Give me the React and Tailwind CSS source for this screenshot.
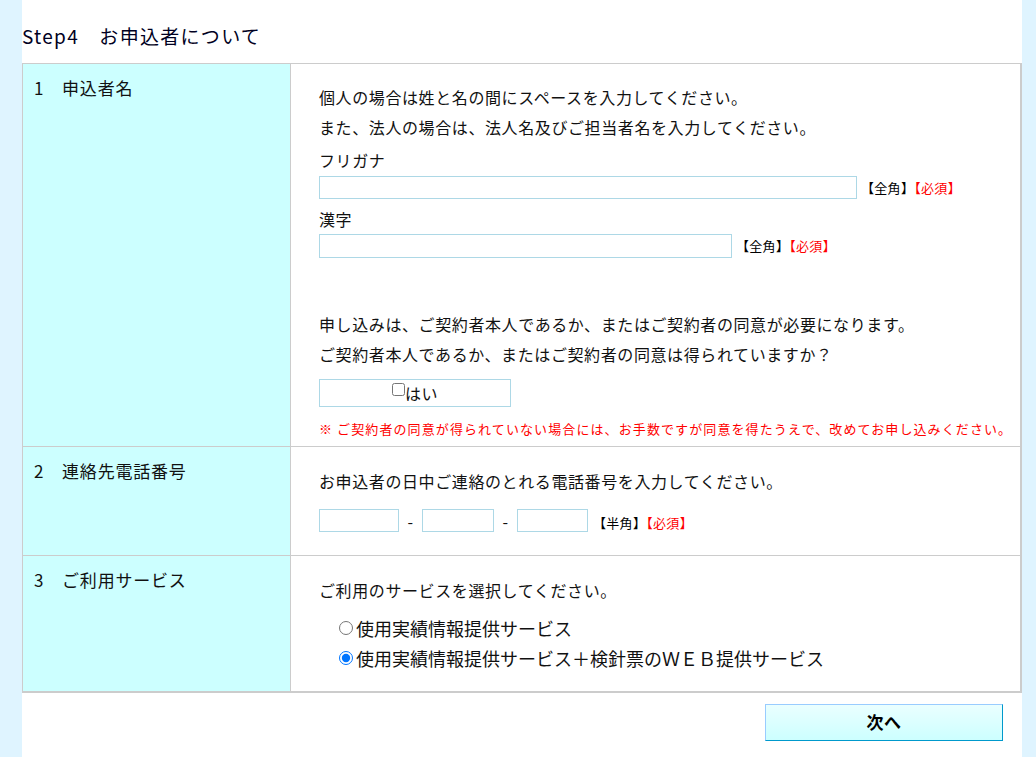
const jp = { fontFamily: '"Noto Sans CJK JP", "Liberation Sans", sans-serif' };

const Tag = ({ kind = '全角' }) => (
  <span className="text-[13px] tracking-[0.3px] whitespace-nowrap">
    <span className="text-black">【{kind}】</span>
    <span className="text-[#ff0000]">【必須】</span>
  </span>
);

const TextBox = ({ className = '' }) => (
  <input type="text" className={'h-[23px] border border-[#add8e6] bg-white outline-none ' + className} />
);

const Label = ({ children }) => (
  <div className="w-[268px] shrink-0 bg-[#ccffff] pl-[11px] pt-[11px] border-r border-[#cccccc] text-[17px] tracking-[0.8px]">
    {children}
  </div>
);

export default function App() {
  return (
    <div className="min-h-[757px] bg-[#dff4ff] px-[22px] pr-[14px] text-[16px] tracking-[0.6px] text-[#111]" style={jp}>
      <div className="min-h-[757px] bg-white">
        <h2 className="pt-[21px] pb-[12px] text-[19px] leading-[30px] tracking-[1.3px] text-[#000022]">Step4　お申込者について</h2>

        <div className="border-t border-l border-r-2 border-b-2 border-[#cccccc]">
          {/* 1 */}
          <div className="flex border-b border-[#cccccc]">
            <Label>1　申込者名</Label>
            <div className="flex-1 pl-[28px] pt-[18px] pb-[7px]">
              <p className="leading-[30px]">個人の場合は姓と名の間にスペースを入力してください。</p>
              <p className="leading-[30px]">また、法人の場合は、法人名及びご担当者名を入力してください。</p>
              <p className="mt-[7px] leading-[22px]">フリガナ</p>
              <div className="flex items-center gap-[4px] mt-[5px]">
                <TextBox className="w-[538px]" />
                <Tag />
              </div>
              <p className="mt-[9px] leading-[22px]">漢字</p>
              <div className="flex items-center gap-[4px] mt-[4px]">
                <TextBox className="w-[413px] h-[24px]" />
                <Tag />
              </div>
              <p className="mt-[51px] leading-[30px]">申し込みは、ご契約者本人であるか、またはご契約者の同意が必要になります。</p>
              <p className="leading-[30px]">ご契約者本人であるか、またはご契約者の同意は得られていますか？</p>
              <label className="mt-[10px] flex h-[28px] w-[192px] items-center justify-center border border-[#add8e6]">
                <input type="checkbox" className="m-0 h-[13px] w-[13px] -translate-y-[4px]" />
                <span>はい</span>
              </label>
              <p className="mt-[12px] text-[13px] text-[#ff0000] tracking-[1.1px]">※ ご契約者の同意が得られていない場合には、お手数ですが同意を得たうえで、改めてお申し込みください。</p>
            </div>
          </div>

          {/* 2 */}
          <div className="flex border-b border-[#cccccc]">
            <Label>2　連絡先電話番号</Label>
            <div className="flex-1 pl-[28px] pt-[22px] pb-[22px]">
              <p className="leading-[24px]">お申込者の日中ご連絡のとれる電話番号を入力してください。</p>
              <div className="mt-[16px] flex items-center">
                <TextBox className="w-[80px]" />
                <span className="w-[23px] text-center">-</span>
                <TextBox className="w-[72px]" />
                <span className="w-[23px] text-center">-</span>
                <TextBox className="w-[71px]" />
                <span className="ml-[5px]"><Tag kind="半角" /></span>
              </div>
            </div>
          </div>

          {/* 3 */}
          <div className="flex">
            <Label>3　ご利用サービス</Label>
            <div className="flex-1 pl-[28px] pt-[22px] pb-[18px]">
              <p className="leading-[24px]">ご利用のサービスを選択してください。</p>
              <div className="mt-[11px] pl-[20px] flex flex-col text-[18px] leading-[30px] tracking-normal">
                <label className="flex items-center h-[30px]">
                  <input type="radio" name="svc" className="m-0 mr-[3px] h-[14px] w-[14px]" />
                  <span>使用実績情報提供サービス</span>
                </label>
                <label className="flex items-center h-[30px]">
                  <input type="radio" name="svc" defaultChecked className="m-0 mr-[3px] h-[14px] w-[14px]" />
                  <span>使用実績情報提供サービス＋検針票のＷＥＢ提供サービス</span>
                </label>
              </div>
            </div>
          </div>
        </div>

        <div className="flex justify-end pr-[19px] pt-[11px]">
          <button className="h-[37px] w-[238px] border border-[#99ccff] border-b-[#0099cc] border-r-[#0099cc] bg-gradient-to-b from-[#eaffff] to-[#ccffff] text-[17px] font-bold text-black">
            次へ
          </button>
        </div>
      </div>
    </div>
  );
}
